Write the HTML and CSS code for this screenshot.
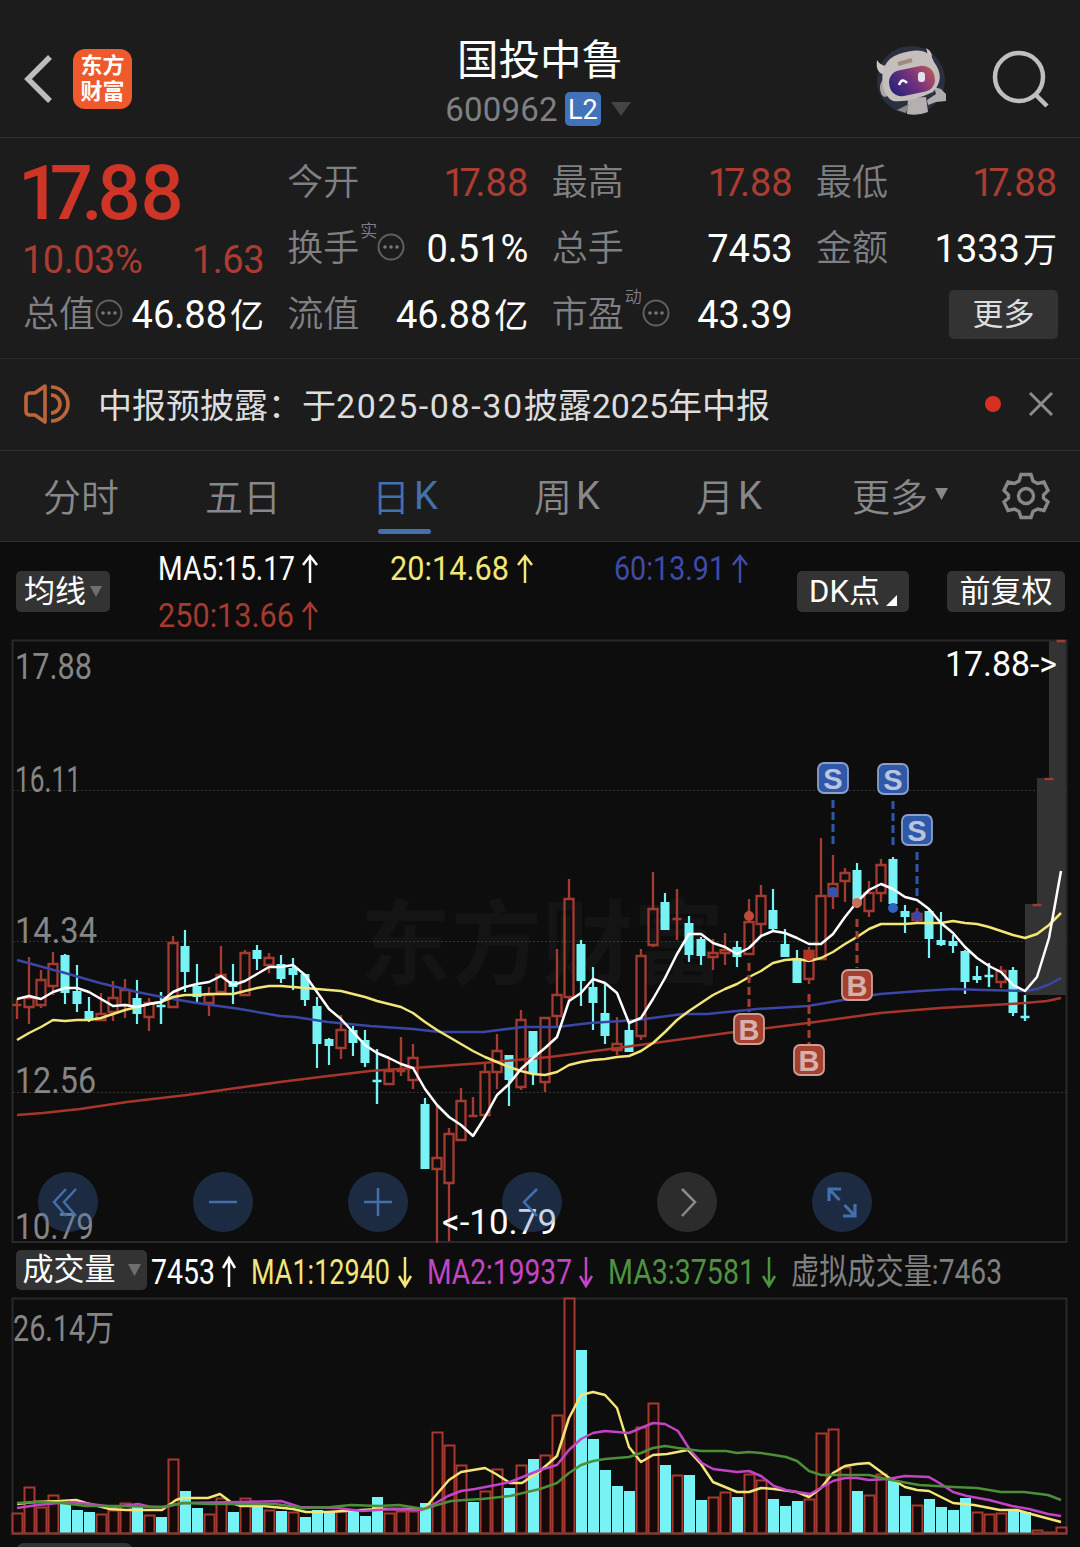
FILE: index.html
```html
<!DOCTYPE html>
<html lang="zh-CN">
<head>
    <meta charset="UTF-8">
    <meta name="viewport" content="width=device-width, initial-scale=1.0">
    <title>国投中鲁 600962</title>
    <link rel="stylesheet" href="styles.css">
</head>
<body>
    <header class="topbar">
        <div class="topbar-left">
            <svg class="back" width="30" height="52" viewBox="0 0 30 52"><path d="M26 4 L4 26 L26 48"/></svg>
            <div class="logo"><span>东方</span><span>财富</span></div>
        </div>
        <div class="title">
            <h1>国投中鲁</h1>
            <div class="code">
                <span class="code-num">600962</span>
                <span class="level">L2</span>
                <svg width="20" height="14" viewBox="0 0 20 14"><path d="M0 0H20L10 14Z" fill="#444"/></svg>
            </div>
        </div>
        <div class="topbar-right">
            <svg class="avatar" width="72" height="72" viewBox="0 0 72 72">
                <defs>
                    <linearGradient id="visor" x1="0" y1="0.6" x2="1" y2="0.3">
                        <stop offset="0" stop-color="#2a2378"/>
                        <stop offset="0.5" stop-color="#70307f"/>
                        <stop offset="1" stop-color="#b8555f"/>
                    </linearGradient>
                </defs>
                <circle cx="35" cy="36" r="34" fill="#2a3040"/>
                <path d="M32 54 L50 53 L52 68 Q42 72 31 70Z" fill="#b5afb0"/>
                <path d="M33 60 L21 66 L30 69Z" fill="#8c8788"/>
                <path d="M51 56 L60 50 L58 43 L65 45 L70 50 V57 L60 58 L52 61Z" fill="#b0abac"/>
                <path d="M9 31 Q-1 29 1 16 Q6 24 15 21Z" fill="#c9c3c1"/>
                <path d="M46 11 Q54 13 50 4 Q60 9 53 22Z" fill="#c9c3c1"/>
                <ellipse cx="9" cy="44" rx="5" ry="9" fill="#aaa5a8"/>
                <path d="M7 42 Q3 17 23 10 Q52 0 58 18 Q70 34 57 48 Q34 59 17 57 Q9 53 7 42Z" fill="#c4bebd"/>
                <rect x="13" y="24" width="46" height="26" rx="12" transform="rotate(-12 36 37)" fill="url(#visor)"/>
                <path d="M23 41 Q26 33 31 39" fill="none" stroke="#fff" stroke-width="2.4"/>
                <rect x="42" y="28" width="7" height="10" rx="3" fill="#e6dfee"/>
                <path d="M22 20 L36 16" stroke="#a28b7b" stroke-width="4"/>
            </svg>
            <svg class="search" width="60" height="60" viewBox="0 0 60 60">
                <circle cx="27" cy="27" r="24"/>
                <path d="M43 44 L55 56"/>
            </svg>
        </div>
    </header>

    <section class="quote">
        <div class="col">
            <div class="price"><span class="kern">17</span><span class="dot">.</span>88</div>
            <div class="change"><span class="pct">10.03%</span><span>1.63</span></div>
            <div class="row">
                <span class="label">总值<svg class="info" width="28" height="28" viewBox="0 0 28 28"><use href="#dots"/></svg></span>
                <span class="val">46.88<em>亿</em></span>
            </div>
        </div>
        <div class="col">
            <div class="row"><span class="label">今开</span><span class="val up"><span class="kern">17</span>.88</span></div>
            <div class="row">
                <span class="label">换手<sup>实</sup><svg class="info" width="28" height="28" viewBox="0 0 28 28"><use href="#dots"/></svg></span>
                <span class="val pct">0.51%</span>
            </div>
            <div class="row"><span class="label">流值</span><span class="val">46.88<em>亿</em></span></div>
        </div>
        <div class="col">
            <div class="row"><span class="label">最高</span><span class="val up"><span class="kern">17</span>.88</span></div>
            <div class="row"><span class="label">总手</span><span class="val">7453</span></div>
            <div class="row">
                <span class="label">市盈<sup>动</sup><svg class="info" width="28" height="28" viewBox="0 0 28 28"><use href="#dots"/></svg></span>
                <span class="val">43.39</span>
            </div>
        </div>
        <div class="col">
            <div class="row"><span class="label">最低</span><span class="val up"><span class="kern">17</span>.88</span></div>
            <div class="row"><span class="label">金额</span><span class="val">1333<em>万</em></span></div>
            <div class="row end"><button class="more">更多</button></div>
        </div>
    </section>

    <section class="notice">
        <svg class="horn" width="48" height="42" viewBox="0 0 48 42">
            <path d="M22 3 L12 10 H7 Q3 10 3 14 V28 Q3 32 7 32 H12 L22 39Z"/>
            <path d="M28 12 A9 9 0 0 1 28 30"/>
            <path d="M28 4 A17 17 0 0 1 28 38"/>
        </svg>
        <p>中报预披露：于<span class="date">2025-08-30</span>披露2025年中报</p>
        <i class="unread"></i>
        <svg class="close" width="28" height="28" viewBox="0 0 28 28"><path d="M3 3 L25 25 M25 3 L3 25"/></svg>
    </section>

    <nav class="tabs">
        <a>分时</a>
        <a>五日</a>
        <a class="k active">日<span>K</span></a>
        <a class="k">周<span>K</span></a>
        <a class="k">月<span>K</span></a>
        <a class="drop">更多<svg width="13" height="12" viewBox="0 0 13 12"><path d="M0 0H13L6.500 12Z" fill="#88888c"/></svg></a>
        <svg class="gear" width="48" height="48" viewBox="0 0 48 48">
            <path d="M19 2.500 H29 L31 9 L35.500 11.500 L42 10 L46 18.500 L41.500 23 V26 L46 30 L42 38.500 L35.500 37 L31 39.500 L29 45.500 H19 L17 39.500 L12.500 37 L6 38.500 L2 30 L6.500 26 V23 L2 18.500 L6 10 L12.500 11.500 L17 9Z"/>
            <circle cx="24" cy="24" r="7.500"/>
        </svg>
    </nav>

    <section class="ma-bar">
        <button class="chip">均线<svg width="12" height="11" viewBox="0 0 12 11"><path d="M0 0H12L6 11Z" fill="#6e6e6e"/></svg></button>
        <svg class="ma-values" width="620" height="98" viewBox="150 542 620 98">
            <g class="white"><text x="158" y="580" textLength="137">MA5:15.17</text><path d="M310 583V557M303 565L310 556L317 565"/></g>
            <g class="yellow"><text x="390" y="580" textLength="119">20:14.68</text><path d="M525 583V557M518 565L525 556L532 565"/></g>
            <g class="blue"><text x="614" y="580" textLength="111">60:13.91</text><path d="M740 583V557M733 565L740 556L747 565"/></g>
            <g class="red"><text x="158" y="627" textLength="136">250:13.66</text><path d="M310 630V604M303 612L310 603L317 612"/></g>
        </svg>
        <button class="chip dk">DK点<i></i></button>
        <button class="chip">前复权</button>
    </section>

    <section class="kline">
        <svg id="kline" width="1080" height="603" viewBox="0 640 1080 603"></svg>
        <div class="tools">
            <button><svg width="60" height="60"><path d="M28 17L16 30L28 44M38 17L26 30L38 44"/></svg></button>
            <button><svg width="60" height="60"><path d="M16 30H44"/></svg></button>
            <button><svg width="60" height="60"><path d="M16 30H44M30 16V44"/></svg></button>
            <button><svg width="60" height="60"><path d="M35 17L22 30L35 44"/></svg></button>
            <button class="off"><svg width="60" height="60"><path d="M25 17L38 30L25 44"/></svg></button>
            <button class="full"><svg width="60" height="60"><path d="M17 29V17H29M17 17L27.500 28M43 32V44H31M43 44L32.500 33"/></svg></button>
        </div>
    </section>

    <section class="vol-bar">
        <button class="chip">成交量<svg width="13" height="12" viewBox="0 0 13 12"><path d="M0 0H13L6.500 12Z" fill="#6e6e6e"/></svg></button>
        <svg class="vol-values" width="910" height="54" viewBox="150 1243 910 54">
            <g class="white"><text x="151" y="1284" textLength="64">7453</text><path d="M229 1287V1259M223 1268L229 1258L235 1268"/></g>
            <g class="yellow"><text x="251" y="1284" textLength="139">MA1:12940</text><path d="M405 1257V1285M399 1276L405 1286L411 1276"/></g>
            <g class="purple"><text x="427" y="1284" textLength="145">MA2:19937</text><path d="M586 1257V1285M580 1276L586 1286L592 1276"/></g>
            <g class="green"><text x="608" y="1284" textLength="147">MA3:37581</text><path d="M769 1257V1285M763 1276L769 1286L775 1276"/></g>
            <g class="gray"><text x="791" y="1284" textLength="211">虚拟成交量:7463</text></g>
        </svg>
    </section>

    <section class="volume">
        <svg id="volume" width="1080" height="238" viewBox="0 1297 1080 238"></svg>
    </section>

    <footer class="next"><div></div></footer>

    <svg class="defs" width="0" height="0">
        <symbol id="dots" viewBox="0 0 28 28">
            <circle cx="14" cy="14" r="12.500" fill="none" stroke="#606062" stroke-width="2"/>
            <circle cx="8" cy="14" r="1.800" fill="#77777a"/>
            <circle cx="14" cy="14" r="1.800" fill="#77777a"/>
            <circle cx="20" cy="14" r="1.800" fill="#77777a"/>
        </symbol>
    </svg>

    <script src="chart.js"></script>
</body>
</html>
```

FILE: styles.css
```css
* {
    box-sizing: border-box;
}

body {
    margin: 0;
    width: 1080px;
    height: 1547px;
    overflow: hidden;
    background-color: #0d0d0d;
    color: #fff;
    font-family: Roboto, "Noto Sans CJK SC", sans-serif;
}

button {
    border: none;
    padding: 0;
    color: #fff;
    font-family: inherit;
}

svg {
    display: block;
    flex-shrink: 0;
    overflow: visible;
}

.defs {
    position: absolute;
}

/* header */
.topbar {
    display: grid;
    grid-template-columns: 1fr 300px 1fr;
    height: 138px;
    background-color: #1c1c1c;
    border-bottom: 1px solid #303030;
}

.topbar-left {
    display: flex;
    align-items: center;
    padding: 20px 0 0 24px;
    gap: 19px;
}

.back path {
    fill: none;
    stroke: #bdbdbd;
    stroke-width: 5.5;
}

.logo {
    display: flex;
    flex-direction: column;
    justify-content: center;
    align-items: center;
    width: 59px;
    height: 60px;
    padding-top: 1px;
    border-radius: 12px;
    background-color: #ee5a2c;
    font-size: 22px;
    line-height: 26px;
    font-weight: 700;
}

.title {
    display: flex;
    flex-direction: column;
    align-items: center;
    padding-top: 34px;
}

.title h1 {
    margin: 0;
    font-size: 41.5px;
    line-height: 53px;
    height: 50px;
    font-weight: 400;
}

.code {
    display: flex;
    align-items: center;
    height: 50px;
    margin-left: -4px;
}

.code-num {
    color: #808084;
    font-size: 33px;
    letter-spacing: 0.2px;
}

.level {
    width: 36px;
    height: 34px;
    margin: 0 10px 0 7px;
    border-radius: 5px;
    background-color: #4172ba;
    font-size: 27px;
    line-height: 36px;
    text-align: center;
}

.topbar-right {
    display: flex;
    align-items: flex-start;
    justify-content: flex-end;
    padding: 44px 28px 0 0;
    gap: 44px;
}

.search {
    margin-top: 6px;
}

.search circle,
.search path {
    fill: none;
    stroke: #bfbfbf;
    stroke-width: 4.5;
}

/* quote */
.quote {
    display: grid;
    grid-template-columns: repeat(4, 240px);
    justify-content: space-between;
    height: 221px;
    padding: 12px 23px 0 24px;
    background-color: #1c1c1c;
    border-bottom: 1px solid #272727;
}

.price {
    height: 86px;
    margin-left: -6px;
    color: #cf3527;
    font-size: 76px;
    line-height: 86px;
    font-weight: 500;
}

.kern {
    letter-spacing: -0.14em;
}

.price .kern {
    letter-spacing: -0.15em;
}

.price .dot {
    letter-spacing: -0.07em;
}

.change {
    display: flex;
    justify-content: space-between;
    height: 46px;
    margin-left: -2px;
    color: #ac3c32;
    font-size: 38px;
    line-height: 49px;
    letter-spacing: -0.5px;
}

.row {
    display: flex;
    align-items: center;
    justify-content: space-between;
    height: 66px;
    line-height: 66px;
}

.row.end {
    justify-content: flex-end;
}

.label {
    position: relative;
    display: flex;
    align-items: center;
    margin-left: -1px;
    color: #808084;
    font-size: 36px;
    font-weight: 350;
}

.label sup {
    align-self: flex-start;
    margin-left: 1px;
    font-size: 17px;
    line-height: 31px;
}

.label .info {
    margin-top: -4px;
}

.val {
    font-size: 38px;
    white-space: nowrap;
}

.val em {
    margin-left: 3px;
    font-size: 34px;
    font-style: normal;
}

.up {
    color: #ac3c32;
}

.more {
    width: 109px;
    height: 49px;
    margin: -2px -1px 0 0;
    border-radius: 5px;
    background-color: #333;
    color: #ddd;
    font-size: 31px;
    line-height: 47px;
}

/* notice */
.notice {
    display: flex;
    align-items: center;
    height: 92px;
    padding: 0 25px 0 23px;
    background-color: #1c1c1c;
    border-bottom: 1px solid #303030;
}

.horn {
    margin-top: -2px;
}

.horn path {
    fill: none;
    stroke: #bd653a;
    stroke-width: 3.6;
    stroke-linejoin: round;
}

.notice p {
    flex: 1;
    margin: -2px 0 0 27px;
    color: #ddd;
    font-size: 34px;
}

.date {
    letter-spacing: 1.6px;
}

.unread {
    width: 16px;
    height: 16px;
    margin: -1px 26px 0 0;
    border-radius: 50%;
    background-color: #d63022;
}

.close {
    margin-top: -1px;
}

.close path {
    stroke: #8c8c8c;
    stroke-width: 3;
}

/* period tabs */
.tabs {
    display: grid;
    grid-template-columns: repeat(6, 162px) 108px;
    align-items: center;
    justify-items: center;
    height: 91px;
    background-color: #1c1c1c;
    border-bottom: 1px solid #303030;
    color: #88888c;
    font-size: 38px;
    font-weight: 350;
}

.tabs a {
    position: relative;
    display: flex;
    align-items: center;
    height: 90px;
    padding-bottom: 4px;
}

.tabs .k span {
    margin: 4px 0 0 4px;
    font-weight: 400;
}

.tabs .drop {
    gap: 7px;
    margin-left: 18px;
}

.tabs .active {
    color: #4470ad;
}

.tabs .active::after {
    content: "";
    position: absolute;
    left: 6px;
    bottom: 7px;
    width: 53px;
    height: 5px;
    border-radius: 3px;
    background-color: #4470ad;
}

.gear path,
.gear circle {
    fill: none;
    stroke: #88888c;
    stroke-width: 3.4;
}

/* moving average bar */
.ma-bar {
    display: flex;
    align-items: center;
    height: 98px;
    padding: 0 15px 0 16px;
}

.chip {
    display: flex;
    align-items: center;
    justify-content: center;
    gap: 4px;
    width: 94px;
    height: 41px;
    border-radius: 5px;
    background-color: #333;
    font-size: 31px;
    line-height: 41px;
}

.ma-bar .chip:last-child {
    width: 118px;
    margin-left: auto;
}

.ma-values {
    margin-left: 40px;
}

.chip.dk {
    width: 112px;
    margin-left: 27px;
    gap: 6px;
}

.chip.dk i {
    align-self: flex-end;
    margin-bottom: 6px;
    border-left: 11px solid transparent;
    border-bottom: 11px solid #fff;
}

.ma-values text,
.vol-values text {
    font-size: 33px;
    stroke: none;
}

.ma-values path,
.vol-values path {
    fill: none;
    stroke-width: 2.5;
}

.white { fill: #fff; stroke: #fff; }
.yellow { fill: #f3e678; stroke: #f3e678; }
.blue { fill: #3f4ba8; stroke: #3f4ba8; }
.red { fill: #a53a30; stroke: #a53a30; }
.purple { fill: #c244c6; stroke: #c244c6; }
.green { fill: #4d9340; stroke: #4d9340; }
.gray { fill: #808080; stroke: #808080; }

/* candles */
.kline {
    position: relative;
    height: 603px;
}

.axis {
    fill: #858585;
    font-size: 36px;
}

.mark {
    fill: #fff;
    font-size: 35px;
}

.watermark {
    fill: #141414;
    font-size: 92px;
    font-weight: 700;
}

.frame {
    fill: none;
    stroke: #292929;
    stroke-width: 2;
}

.gridline {
    stroke: #363636;
    stroke-dasharray: 2 2;
}

.line {
    fill: none;
    stroke-width: 2.5;
    stroke-linejoin: round;
}

.badge-text {
    font-family: "Liberation Sans", sans-serif;
    font-size: 29px;
    font-weight: 700;
    text-anchor: middle;
}

.tools {
    position: absolute;
    left: 38px;
    bottom: 11px;
    display: flex;
    gap: 94.8px;
}

.tools button {
    width: 60px;
    height: 60px;
    border-radius: 50%;
    background-color: rgba(63, 113, 186, 0.3);
}

.tools path {
    fill: none;
    stroke: #426fad;
    stroke-width: 2.5;
}

.tools .off {
    background-color: #2c2c2c;
}

.tools .off path {
    stroke: #8a8a8a;
}

.tools .full path {
    stroke-width: 3.2;
}

/* volume */
.vol-bar {
    display: flex;
    align-items: center;
    height: 54px;
    padding-left: 16px;
}

.vol-bar .chip {
    width: 131px;
    height: 40px;
    gap: 12px;
    line-height: 42px;
}

.vol-values {
    margin-left: 3px;
}

.vol-values text {
    font-size: 35px;
}

.volume {
    height: 238px;
}

.next {
    padding: 8px 0 0 16px;
}

.next div {
    width: 117px;
    height: 40px;
    border-radius: 8px;
    background-color: #333;
}
```

FILE: chart.js
```js
const RED = '#a53a30';
const CYAN = '#77f3f5';
const STEP = 12;
const LEFT = 17;

// [type, high, body top, body bottom, low]
const candles = [
    ['r', 999, 1005, 1005, 1019], ['r', 957, 998, 1007, 1024], ['r', 970, 980, 1005, 1008], ['r', 952, 964, 986, 995],
    ['c', 954, 955, 993, 1004], ['c', 965, 991, 1004, 1012], ['c', 997, 1011, 1020, 1022], ['r', 993, 1014, 1020, 1020],
    ['r', 981, 998, 1012, 1021], ['r', 979, 990, 1005, 1018], ['c', 980, 998, 1014, 1024], ['r', 998, 1003, 1017, 1031],
    ['c', 992, 1006, 1006, 1024], ['r', 936, 943, 1007, 1007], ['c', 930, 946, 972, 992], ['c', 964, 986, 997, 1003],
    ['r', 987, 995, 1003, 1016], ['r', 946, 975, 992, 992], ['c', 964, 981, 987, 1004], ['r', 950, 953, 995, 995],
    ['c', 945, 950, 959, 970], ['r', 953, 958, 965, 973], ['c', 955, 964, 979, 983], ['c', 958, 968, 975, 990],
    ['c', 974, 974, 1000, 1006], ['c', 997, 1006, 1044, 1068], ['c', 1038, 1039, 1046, 1065], ['r', 1015, 1030, 1048, 1059],
    ['c', 1026, 1030, 1043, 1056], ['c', 1030, 1040, 1063, 1067], ['c', 1049, 1081, 1081, 1104], ['r', 1058, 1071, 1084, 1085],
    ['r', 1037, 1071, 1071, 1076], ['r', 1044, 1058, 1080, 1089], ['c', 1098, 1104, 1169, 1169], ['r', 1106, 1158, 1169, 1243],
    ['r', 1128, 1134, 1183, 1241], ['r', 1088, 1101, 1140, 1140], ['r', 1097, 1116, 1116, 1117], ['r', 1063, 1072, 1115, 1115],
    ['r', 1034, 1051, 1072, 1089], ['c', 1055, 1055, 1080, 1106], ['r', 1010, 1020, 1087, 1090], ['c', 1031, 1031, 1074, 1085],
    ['r', 1017, 1018, 1082, 1092], ['r', 949, 995, 1016, 1028], ['r', 879, 899, 997, 1001], ['c', 940, 944, 981, 1006],
    ['c', 967, 987, 1003, 1030], ['c', 983, 1013, 1036, 1044], ['r', 1017, 1044, 1050, 1055], ['c', 1023, 1030, 1052, 1052],
    ['r', 949, 956, 1036, 1040], ['r', 872, 909, 945, 947], ['c', 893, 902, 930, 930], ['r', 889, 919, 919, 940],
    ['c', 916, 923, 955, 962], ['c', 937, 939, 956, 965], ['r', 939, 953, 957, 970], ['r', 933, 950, 953, 965],
    ['c', 941, 947, 957, 967], ['r', 899, 922, 954, 954], ['r', 885, 896, 924, 937], ['c', 889, 910, 929, 930],
    ['c', 929, 944, 957, 957], ['c', 950, 958, 983, 983], ['r', 947, 951, 979, 984], ['r', 838, 896, 959, 959],
    ['r', 855, 884, 896, 909], ['r', 868, 873, 881, 902], ['c', 863, 870, 902, 908], ['r', 881, 893, 911, 917],
    ['r', 859, 865, 893, 902], ['c', 857, 859, 904, 912], ['c', 905, 911, 917, 933], ['r', 908, 914, 920, 922],
    ['c', 909, 911, 939, 958], ['c', 912, 940, 945, 946], ['c', 935, 941, 946, 953], ['c', 950, 951, 982, 994],
    ['c', 966, 976, 980, 983], ['c', 963, 976, 976, 987], ['r', 966, 971, 982, 988], ['c', 967, 970, 1013, 1016],
    ['c', 995, 1017, 1017, 1021], ['r', 905, 905, 905, 905], ['r', 779, 779, 779, 779], ['r', 641, 641, 641, 641]
];

// one value per candle
const ma5 = [999, 996, 999, 992, 988, 988, 992, 999, 1006, 1005, 1007, 1004, 1002, 992, 987, 984, 982, 976, 985, 981, 974, 967,
    967, 965, 975, 992, 1009, 1019, 1032, 1045, 1053, 1058, 1064, 1068, 1089, 1105, 1117, 1125, 1136, 1117, 1095, 1084, 1069,
    1058, 1048, 1037, 1001, 993, 979, 983, 993, 1023, 1018, 999, 978, 954, 934, 934, 943, 947, 954, 948, 936, 931, 933, 938,
    944, 944, 934, 917, 902, 890, 884, 889, 897, 900, 909, 923, 933, 947, 958, 966, 972, 985, 991, 977, 938, 871];
const ma20 = [1040, 1033, 1027, 1020, 1021, 1020, 1020, 1018, 1014, 1010, 1007, 1004, 1002, 997, 995, 995, 994, 994, 994, 991,
    988, 986, 986, 987, 988, 989, 990, 991, 994, 997, 1001, 1004, 1007, 1013, 1022, 1030, 1037, 1044, 1051, 1057, 1062, 1067,
    1071, 1074, 1075, 1072, 1065, 1062, 1060, 1059, 1057, 1056, 1051, 1043, 1032, 1020, 1011, 1003, 995, 989, 984, 977, 971,
    963, 960, 959, 961, 958, 952, 944, 937, 929, 924, 924, 924, 923, 923, 923, 921, 923, 924, 927, 931, 935, 938, 934, 925, 913];
const ma60 = '17,960 65,973 100,983 137,992 167,998 197,1003 240,1009 280,1016 295,1017 328,1022 370,1026 413,1029 440,1032 483,1032 523,1027 557,1027 590,1023 637,1020 683,1014 707,1014 757,1009 808,1006 843,1000 880,994 920,991 953,989 983,990 1025,991 1037,989 1050,984 1061,978';
const ma250 = '17,1115 43,1113 80,1109 127,1102 187,1095 280,1082 320,1077 370,1071 413,1068 483,1063 550,1057 573,1054 647,1044 727,1033 808,1023 880,1013 940,1008 1025,1003 1047,1001 1061,998';

// bar tops
const volumes = [1513, 1487, 1507, 1495, 1504, 1510, 1512, 1514, 1510, 1503, 1507, 1515, 1517, 1459, 1491, 1508, 1514, 1498, 1512,
    1498, 1507, 1510, 1511, 1512, 1517, 1510, 1511, 1511, 1511, 1516, 1497, 1513, 1511, 1511, 1503, 1432, 1445, 1465, 1502, 1491,
    1469, 1488, 1465, 1459, 1455, 1415, 1298, 1350, 1439, 1470, 1486, 1491, 1427, 1403, 1465, 1475, 1475, 1500, 1497, 1492, 1497,
    1474, 1480, 1499, 1506, 1501, 1499, 1433, 1429, 1467, 1491, 1495, 1474, 1480, 1496, 1505, 1499, 1507, 1510, 1498, 1512, 1514,
    1513, 1510, 1512, 1530, 1532, 1527];
const volColors = 'rrrrcccrrrcrcrccrrcrcrcrcccrcccrrrcrrrcrrcrcrrrcccccrrcrccrrcrrcccrrrrcrrccrccccrrrccrrr';

const volMa1 = '17,1504 34,1502 60,1501 76,1500 86,1503 110,1509 126,1510 162,1510 176,1500 182,1498 208,1498 220,1494 232,1503 241,1506 263,1506 293,1509 306,1512 327,1512 379,1509 424,1509 437,1494 449,1480 461,1472 485,1468 496,1474 510,1483 522,1483 540,1471 557,1456 569,1418 581,1395 593,1392 605,1395 617,1408 629,1447 641,1462 653,1455 667,1454 688,1450 701,1464 713,1482 737,1492 749,1492 761,1488 774,1489 797,1492 809,1497 821,1488 833,1473 845,1466 857,1464 869,1463 888,1477 905,1487 917,1490 929,1491 953,1503 974,1505 1000,1510 1017,1510 1031,1514 1061,1522';
const volMa2 = '17,1508 38,1505 69,1502 90,1504 114,1507 138,1504 151,1507 165,1507 183,1503 241,1502 281,1501 300,1507 337,1508 362,1511 393,1509 422,1510 434,1504 448,1496 461,1491 475,1489 496,1485 510,1482 540,1470 557,1465 569,1450 581,1439 593,1433 605,1431 617,1432 629,1433 641,1428 653,1423 665,1424 678,1431 690,1450 702,1463 713,1469 737,1472 749,1471 761,1476 774,1486 786,1490 797,1492 810,1494 833,1481 845,1478 857,1478 869,1480 888,1479 905,1476 929,1477 941,1484 953,1492 967,1496 989,1500 1012,1506 1029,1509 1048,1514 1061,1516';
const volMa3 = '17,1503 38,1502 62,1503 86,1506 120,1506 162,1507 183,1503 210,1504 275,1504 303,1508 331,1507 351,1505 379,1506 399,1505 424,1509 437,1505 451,1501 465,1500 482,1499 510,1496 540,1489 557,1483 569,1473 581,1465 593,1461 605,1459 629,1457 641,1453 653,1448 665,1446 678,1448 701,1451 726,1451 737,1453 749,1452 761,1453 774,1455 786,1457 797,1461 809,1471 821,1475 845,1475 869,1475 891,1480 919,1485 953,1487 977,1488 1001,1492 1024,1492 1048,1495 1061,1500';

// buy / sell points: [letter, x, badge y, dash start, dash end, dot y, dot color]
const signals = [
    ['S', 833, 778, 800, 844, 892, '#3554b0'],
    ['S', 893, 779, 801, 845, 908, '#2d62c0'],
    ['S', 917, 830, 852, 896, 916, '#3f459f'],
    ['B', 857, 985, 919, 968, 903, '#c8705c'],
    ['B', 749, 1029, 963, 1012, 916, '#c04a38'],
    ['B', 809, 1060, 994, 1044, 956, '#b53325']
];

function polyline(points, color) {
    return `<polyline class="line" points="${points}" stroke="${color}"/>`;
}

function series(values) {
    return values.map((y, i) => `${LEFT + i * STEP},${y}`).join(' ');
}

function drawCandle([type, high, top, bottom, low], i) {
    const x = LEFT + i * STEP;
    const color = type === 'r' ? RED : CYAN;
    if (top === bottom) {
        return `<path d="M${x} ${high}V${low}M${x - 4.5} ${top}H${x + 4.5}" stroke="${color}" stroke-width="2.4"/>`;
    }
    if (type === 'c') {
        return `<path d="M${x} ${high}V${low}" stroke="${color}" stroke-width="2.2"/>
            <rect x="${x - 4.5}" y="${top}" width="9" height="${bottom - top}" fill="${color}"/>`;
    }
    return `<path d="M${x} ${high}V${top}M${x} ${bottom}V${low}M${x - 4.5} ${top}H${x + 4.5}V${bottom}H${x - 4.5}Z"
        fill="none" stroke="${color}" stroke-width="2.3"/>`;
}

function drawSignal([letter, x, y, from, to, dot, dotColor]) {
    const sell = letter === 'S';
    const color = sell ? '#2f59a8' : '#a34030';
    return `<path d="M${x} ${from}V${to}" stroke="${color}" stroke-width="3" stroke-dasharray="8 4"/>
        <circle cx="${x}" cy="${dot}" r="5" fill="${dotColor}"/>
        <rect x="${x - 15}" y="${y - 15}" width="30" height="30" rx="6" fill="${color}" stroke="${sell ? '#8ba0c8' : '#cf9e95'}" stroke-width="1.8"/>
        <text class="badge-text" x="${x}" y="${y + 10.5}" fill="${sell ? '#b9c5de' : '#d8b0aa'}">${letter}</text>`;
}

function drawKline() {
    const labels = [['17.88', 15, 679, 77], ['16.11', 15, 792, 66], ['14.34', 15, 943, 82], ['12.56', 15, 1093, 81], ['10.79', 15, 1239, 79]];
    let html = '<text class="watermark" x="360" y="977" textLength="364">东方财富</text>';
    html += '<path d="M1025 995V904H1037V778H1049V641H1067V995Z" fill="#333"/>';
    html += '<rect class="frame" x="12.500" y="640.500" width="1054" height="601.500"/>';
    [790.5, 941.5, 1092.5].forEach(y => {
        html += `<path class="gridline" d="M13 ${y}H1067"/>`;
    });
    html += candles.map(drawCandle).join('');
    html += polyline(ma250, '#a8352a') + polyline(ma60, '#3a46a5');
    html += polyline(series(ma20), '#f3e678') + polyline(series(ma5), '#fff');
    html += signals.map(drawSignal).join('');
    labels.forEach(([text, x, y, width]) => {
        html += `<text class="axis" x="${x}" y="${y}" textLength="${width}">${text}</text>`;
    });
    html += '<text class="mark" x="945" y="676" textLength="112">17.88-&gt;</text>';
    html += '<text class="mark" x="442" y="1234" textLength="115">&lt;-10.79</text>';
    document.getElementById('kline').innerHTML = html;
}

function drawVolume() {
    let html = '<rect class="frame" x="12.500" y="1298.500" width="1054" height="235"/>';
    volumes.forEach((top, i) => {
        const x = LEFT + i * STEP;
        if (volColors[i] === 'c') {
            html += `<rect x="${x - 5}" y="${top}" width="11" height="${1533 - top}" fill="${CYAN}"/>`;
        } else {
            html += `<rect x="${x - 4.5}" y="${top + 0.5}" width="10" height="${Math.max(1533 - top, 1)}" fill="#150909" stroke="${RED}" stroke-width="2"/>`;
        }
    });
    html += '<path d="M12 1533.500H1067" stroke="#743f3b" stroke-width="2"/>';
    html += polyline(volMa1, '#f3e678') + polyline(volMa2, '#c244c6') + polyline(volMa3, '#4d8f38');
    html += '<text class="axis" x="13" y="1341" textLength="101">26.14万</text>';
    document.getElementById('volume').innerHTML = html;
}

// squeeze the glyphs together with the spacing
function condense() {
    document.querySelectorAll('text[textLength]').forEach(t => t.setAttribute('lengthAdjust', 'spacingAndGlyphs'));
}

drawKline();
drawVolume();
condense();
```
